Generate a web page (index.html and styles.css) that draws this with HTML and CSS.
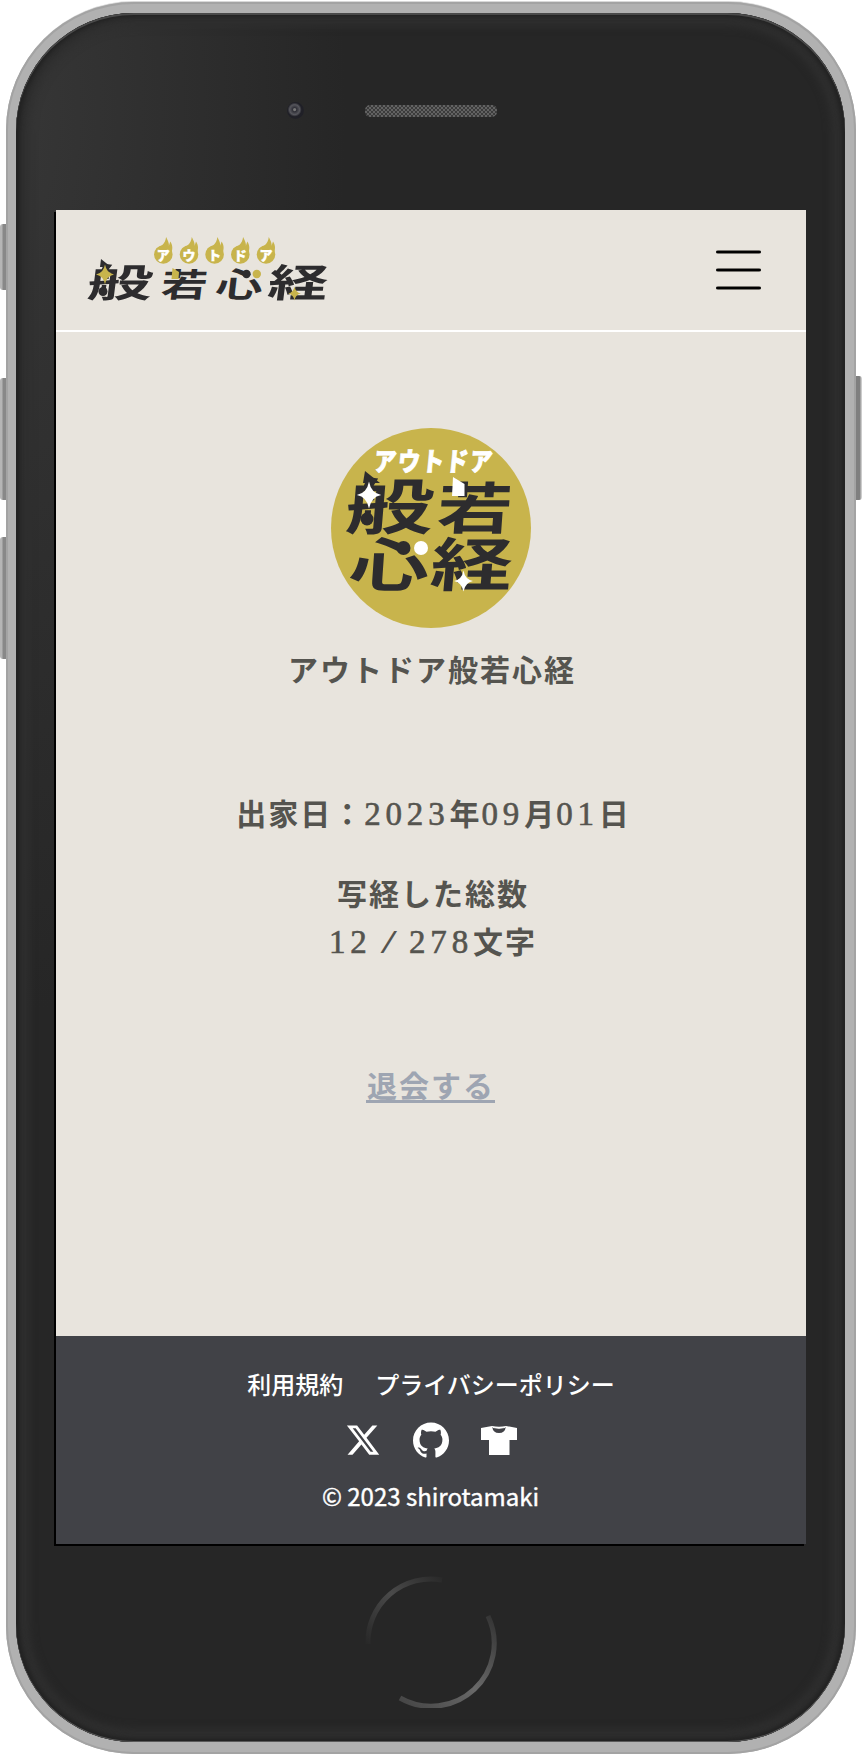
FILE: index.html
```html
<!DOCTYPE html>
<html lang="ja">
<head>
<meta charset="utf-8">
<title>アウトドア般若心経</title>
<link rel="stylesheet" href="styles.css">
</head>
<body>
<div class="device">
  <span class="key key-mute"></span>
  <span class="key key-up"></span>
  <span class="key key-down"></span>
  <span class="key key-power"></span>
  <div class="bezel">
    <div class="sensors">
      <span class="camera"></span>
      <span class="speaker"></span>
    </div>
    <div class="screen">
      <header class="header">
        <svg class="logo" viewBox="0 0 240 68">
          <defs>
            <path id="spark" d="M0-10Q1.500-1.500 9-0Q1.500 1.500 0 10Q-1.500 1.500-9 0Q-1.500-1.500 0-10Z"/>
            <g id="fire"><circle r="9.300"/><path d="M-7.500-5.500C-3-8 2-10 2.800-17.500C5-13 6-11 5.500-8.500L7-13C9-10 9.500-7 8.500-3L0 2Z"/></g>
          </defs>
          <g class="kanji">
            <text transform="matrix(.65 0 -.05 .39 -2 60.500)">般</text>
            <text transform="matrix(.46 0 -.04 .33 72 61)">若</text>
            <text transform="matrix(.47 0 -.04 .34 126.500 61)">心</text>
            <text transform="matrix(.60 0 -.05 .39 178.500 61)">経</text>
          </g>
          <path class="ink" d="M13 23L23 31H12Z"/>
          <circle class="ink" cx="15" cy="55.500" r="4.500"/>
          <circle class="ink" cx="158.500" cy="38" r="4.200"/>
          <g class="gold">
            <use href="#spark" x="17" y="38.500"/>
            <use href="#spark" transform="translate(206.500 57.500) scale(.7)"/>
            <path d="M83.500 43L84.500 32L91 36L90.500 43Z"/>
            <circle cx="168.800" cy="38" r="4.200"/>
            <use href="#fire" x="75.300" y="18.500"/>
            <use href="#fire" x="101" y="18.500"/>
            <use href="#fire" x="126.600" y="18.500"/>
            <use href="#fire" x="152.300" y="18.500"/>
            <use href="#fire" x="178" y="18.500"/>
          </g>
          <g class="kana">
            <text x="75.300" y="23.500">ア</text><text x="101" y="23.500">ウ</text><text x="126.600" y="23.500">ト</text><text x="152.300" y="23.500">ド</text><text x="178" y="23.500">ア</text>
          </g>
        </svg>
        <div class="menu"><span></span><span></span><span></span></div>
      </header>
      <main class="profile">
        <svg class="avatar" viewBox="0 0 200 200">
          <circle class="disc" cx="100" cy="100" r="100"/>
          <g class="kanji">
            <text transform="matrix(.88 0 -.05 .61 13 101)">般</text>
            <text transform="matrix(.75 0 -.04 .56 105 100.500)">若</text>
            <text transform="matrix(.80 0 -.04 .58 17 157.500)">心</text>
            <text transform="matrix(.82 0 -.05 .58 98 157.500)">経</text>
          </g>
          <path class="ink" d="M34 43L49 55H32Z"/>
          <circle class="ink" cx="36" cy="91" r="6.500"/>
          <circle class="ink" cx="72.500" cy="120" r="7"/>
          <g class="white">
            <text class="avatar-kana" transform="matrix(1 0 -.1 1 42 42.500)" textLength="120" lengthAdjust="spacingAndGlyphs">アウトドア</text>
            <use href="#spark" transform="translate(38 67) scale(1.350)"/>
            <use href="#spark" transform="translate(132.500 153) scale(1.050)"/>
            <circle cx="90" cy="120" r="7"/>
            <path d="M122 49L133.500 56V68H121Z"/>
          </g>
        </svg>
        <h1 class="name">アウトドア般若心経</h1>
        <p class="joined">出家日：<b>2023</b>年<b>09</b>月<b>01</b>日</p>
        <p class="count">写経した総数<br><b>12</b><i class="slash">/</i><b>278</b>文字</p>
        <a class="leave">退会する</a>
      </main>
      <footer class="footer">
        <nav class="links"><a>利用規約</a><a>プライバシーポリシー</a></nav>
        <div class="social">
          <svg class="icon icon-x" viewBox="0 0 24 24"><path d="M18.244 2.250h3.308l-7.227 8.260 8.502 11.240H16.170l-5.214-6.817L4.990 21.750H1.680l7.730-8.835L1.254 2.250H8.080l4.713 6.231zm-1.161 17.520h1.833L7.084 4.126H5.117z"/></svg>
          <svg class="icon" viewBox="0 0 24 24"><path d="M12 .297c-6.630 0-12 5.373-12 12 0 5.303 3.438 9.800 8.205 11.385.6.113.82-.258.82-.577 0-.285-.01-1.040-.015-2.040-3.338.724-4.042-1.610-4.042-1.610C4.422 18.070 3.633 17.700 3.633 17.700c-1.087-.744.084-.729.084-.729 1.205.084 1.838 1.236 1.838 1.236 1.070 1.835 2.809 1.305 3.495.998.108-.776.417-1.305.76-1.605-2.665-.3-5.466-1.332-5.466-5.930 0-1.310.465-2.380 1.235-3.220-.135-.303-.54-1.523.105-3.176 0 0 1.005-.322 3.300 1.230.96-.267 1.980-.399 3-.405 1.020.006 2.040.138 3 .405 2.280-1.552 3.285-1.230 3.285-1.230.645 1.653.24 2.873.12 3.176.765.840 1.230 1.910 1.230 3.220 0 4.610-2.805 5.625-5.475 5.920.42.360.81 1.096.81 2.220 0 1.606-.015 2.896-.015 3.286 0 .315.21.690.825.570C20.565 22.092 24 17.592 24 12.297c0-6.627-5.373-12-12-12"/></svg>
          <svg class="icon" viewBox="0 0 36 36"><path d="M11 4Q18 5.500 25 4L36 6V18H28.500V33H8V18H0V6Z"/><path class="collar" d="M11.300 5.200Q18 7.300 24.700 5.200Q24 11 18 11T11.300 5.200Z"/><path class="neck" d="M12 5.500Q18 7 24 5.500"/></svg>
        </div>
        <p class="copy">© 2023 shirotamaki</p>
      </footer>
    </div>
    <svg class="home" viewBox="0 0 132 132">
      <defs>
        <linearGradient id="upper" x1="1" y1="0" x2="0" y2="1"><stop offset="0" stop-color="#2a2a2a"/><stop offset=".45" stop-color="#4a4a4a"/><stop offset="1" stop-color="#282828"/></linearGradient>
        <linearGradient id="lower" x1="1" y1="0" x2="0" y2="1"><stop offset="0" stop-color="#333"/><stop offset=".5" stop-color="#696969"/><stop offset="1" stop-color="#444"/></linearGradient>
      </defs>
      <path stroke="url(#upper)" d="M3 68A63 63 0 0 1 77 4"/>
      <path stroke="url(#lower)" d="M123 40A63 63 0 0 1 35 122"/>
    </svg>
  </div>
</div>
</body>
</html>
```
FILE: styles.css
```css
* { box-sizing: border-box; }
body {
  margin: 0;
  background: #fff;
  font-family: "Noto Sans CJK JP", "Noto Sans", sans-serif;
}
.device {
  position: relative;
  width: 850px;
  height: 1752px;
  margin: 2px 0 0 6px;
  padding: 11px 11px 11px 10px;
  border-radius: 128px;
  background: #b1b1b1;
  box-shadow: inset 0 0 0 2px #a3a3a3, 0 -2px 0 -1px #d8d8d8;
}
.key {
  position: absolute;
  left: -6px;
  width: 6px;
  border-radius: 3px 0 0 3px;
  background: linear-gradient(90deg, #b5b5b5 0 2px, #888 3px);
}
.key-mute { top: 222px; height: 66px; }
.key-up { top: 376px; height: 122px; }
.key-down { top: 535px; height: 122px; }
.key-power {
  left: auto;
  right: -6px;
  top: 374px;
  height: 124px;
  border-radius: 0 3px 3px 0;
  background: linear-gradient(90deg, #7f7f7f 4px, #ccc 5px);
}
.bezel {
  display: flex;
  flex-direction: column;
  align-items: center;
  height: 1729px;
  border-radius: 118px;
  background: radial-gradient(ellipse 330px 900px at 0 100px, #363636, #262626);
  box-shadow: inset 0 2px #4a4a4a, inset 0 -1px #5a5a5a, inset 0 0 4px 4px #222, inset 0 0 8px 13px #2f2f2f;
}
.sensors {
  display: flex;
  align-items: center;
  gap: 61px;
  width: 100%;
  height: 197px;
  padding: 0 0 2px 271px;
}
.camera {
  width: 17px;
  height: 17px;
  border-radius: 50%;
  background: radial-gradient(circle at 45% 45%, #777 0 1px, #303038 2px, #56565c 5px, #202027 7px);
}
.speaker {
  width: 132px;
  height: 12px;
  border-radius: 5px;
  background: repeating-conic-gradient(#626262 0 25%, #3b3b3b 0 50%) 0 0 / 4px 4px;
}
.screen {
  width: 750px;
  height: 1334px;
  display: flex;
  flex-direction: column;
  background: #e8e4dd;
  box-shadow: -2px 2px #000;
}
.header {
  display: flex;
  justify-content: space-between;
  align-items: flex-start;
  height: 122px;
  padding: 26px 45px 0 32px;
  border-bottom: 2px solid #fff;
}
.logo { width: 240px; height: 68px; overflow: visible; }
.kanji {
  fill: #2d2c2e;
  font-size: 100px;
  font-weight: 700;
}
.ink { fill: #2d2c2e; }
.gold { fill: #c8b44c; }
.disc { fill: #c8b44c; }
.white { fill: #fff; }
.kana {
  fill: #fff;
  stroke: #fff;
  stroke-width: .4px;
  font-size: 13px;
  font-weight: 900;
  text-anchor: middle;
}
.avatar-kana {
  stroke: #fff;
  stroke-width: .8px;
  font-size: 26px;
  font-weight: 900;
}
.menu {
  display: flex;
  flex-direction: column;
  gap: 14px;
  width: 45px;
  padding-top: 14px;
}
.menu span {
  height: 4px;
  border-radius: 2px;
  background: linear-gradient(#77746f 1px, #000 1px 3px, #77746f 3px);
}
.profile {
  display: flex;
  flex-direction: column;
  align-items: center;
  flex: 1;
  padding-top: 96px;
  color: #55544f;
  font-size: 30px;
  font-weight: 700;
  line-height: 48px;
  letter-spacing: 2px;
  text-align: center;
  white-space: nowrap;
}
.avatar { width: 200px; height: 200px; }
.name { margin: 16px 0 0; padding-left: 3px; font-size: 30px; }
.joined { margin: 96px 0 0; padding-left: 6px; }
.count { margin: 32px 0 0; padding-left: 5px; }
.profile b {
  font-family: "Liberation Serif", serif;
  font-size: 33px;
  font-weight: 400;
  line-height: 1;
  letter-spacing: 4.830px;
  -webkit-text-stroke: .6px #55544f;
}
.slash {
  display: inline-block;
  width: 37.300px;
  font: 33px/1 "Liberation Serif", serif;
  letter-spacing: 0;
  transform: translateX(-2px) scaleX(1.800);
}
.leave {
  margin-top: 96px;
  height: 43px;
  padding-left: 1px;
  border-bottom: 3px solid #9ea5b2;
  color: #9ea5b2;
}
.footer {
  display: flex;
  flex-direction: column;
  align-items: center;
  height: 208px;
  padding-top: 30px;
  background: #414247;
  color: #fff;
  font-size: 24px;
  font-weight: 500;
  line-height: 36px;
}
.links { display: flex; gap: 32px; padding-left: 1px; }
.social {
  display: flex;
  align-items: center;
  gap: 32px;
  height: 36px;
  margin-top: 20px;
}
.icon { width: 36px; height: 36px; fill: #fff; }
.collar { fill: #414247; }
.neck { fill: none; stroke: #fff; stroke-width: 1; }
.copy {
  margin: 20px 0 0;
  font-weight: 400;
  -webkit-text-stroke: .4px #fff;
}
.home {
  width: 132px;
  height: 132px;
  margin-top: 32px;
  fill: none;
  stroke-width: 5;
}
```
